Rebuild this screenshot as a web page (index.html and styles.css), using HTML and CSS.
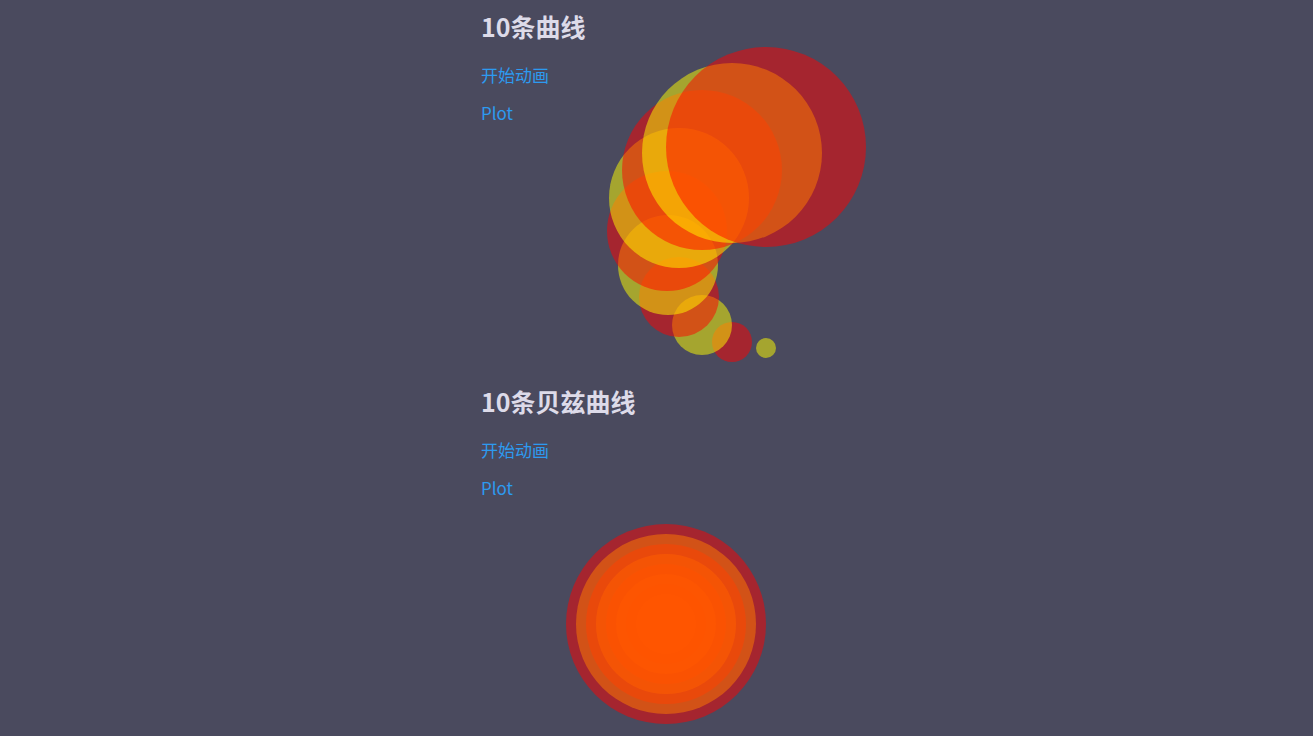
FILE: index.html
```html
<!DOCTYPE html>
<html lang="zh-CN">
<head>
<meta charset="utf-8">
<title>曲线</title>
<link rel="stylesheet" href="styles.css">
</head>
<body>
<main class="page">
  <section class="demo">
    <h2 class="demo-title">10条曲线</h2>
    <div class="demo-links">
      <a class="demo-link" href="#">开始动画</a>
      <a class="demo-link" href="#">Plot</a>
    </div>
    <svg class="chart" width="400" height="250" viewBox="0 0 400 250">
      <circle class="c-olive" cx="285" cy="224" r="10"/>
      <circle class="c-red" cx="251" cy="218" r="20"/>
      <circle class="c-olive" cx="221" cy="201" r="30"/>
      <circle class="c-red" cx="198" cy="173" r="40"/>
      <circle class="c-olive" cx="187" cy="141" r="50"/>
      <circle class="c-red" cx="186" cy="107" r="60"/>
      <circle class="c-olive" cx="198" cy="74" r="70"/>
      <circle class="c-red" cx="221" cy="46" r="80"/>
      <circle class="c-olive" cx="251" cy="29" r="90"/>
      <circle class="c-red" cx="285" cy="23" r="100"/>
    </svg>
  </section>
  <section class="demo">
    <h2 class="demo-title">10条贝兹曲线</h2>
    <div class="demo-links">
      <a class="demo-link" href="#">开始动画</a>
      <a class="demo-link" href="#">Plot</a>
    </div>
    <svg class="chart" width="400" height="250" viewBox="0 0 400 250">
      <circle class="c-olive" cx="185" cy="125" r="10"/>
      <circle class="c-red" cx="185" cy="125" r="20"/>
      <circle class="c-olive" cx="185" cy="125" r="30"/>
      <circle class="c-red" cx="185" cy="125" r="40"/>
      <circle class="c-olive" cx="185" cy="125" r="50"/>
      <circle class="c-red" cx="185" cy="125" r="60"/>
      <circle class="c-olive" cx="185" cy="125" r="70"/>
      <circle class="c-red" cx="185" cy="125" r="80"/>
      <circle class="c-olive" cx="185" cy="125" r="90"/>
      <circle class="c-red" cx="185" cy="125" r="100"/>
    </svg>
  </section>
</main>
</body>
</html>
```

FILE: styles.css
```css
html, body {
  margin: 0;
  padding: 0;
  background: #4a4a5e;
  overflow: hidden;
}

body {
  font-family: "Noto Sans CJK SC", "Noto Sans", sans-serif;
}

.page {
  width: 351px;
  margin: 0 auto;
}

.demo {
  display: flex;
  flex-direction: column;
  align-items: flex-start;
  height: 375px;
  padding-top: 11px;
  box-sizing: border-box;
}

.demo-title {
  margin: 0 0 22px;
  font-size: 25px;
  line-height: 30px;
  font-weight: 700;
  color: #dddbe9;
}

.demo-links {
  display: flex;
  flex-direction: column;
  align-items: flex-start;
  gap: 14px;
}

.demo-link {
  font-size: 17px;
  line-height: 24px;
  color: #2d9af0;
  text-decoration: none;
}

.chart {
  display: block;
  overflow: visible;
  flex: none;
  margin-top: -1px;
}

.c-red {
  fill: rgba(255, 0, 0, 0.5);
}

.c-olive {
  fill: rgba(255, 255, 0, 0.5);
}
```
